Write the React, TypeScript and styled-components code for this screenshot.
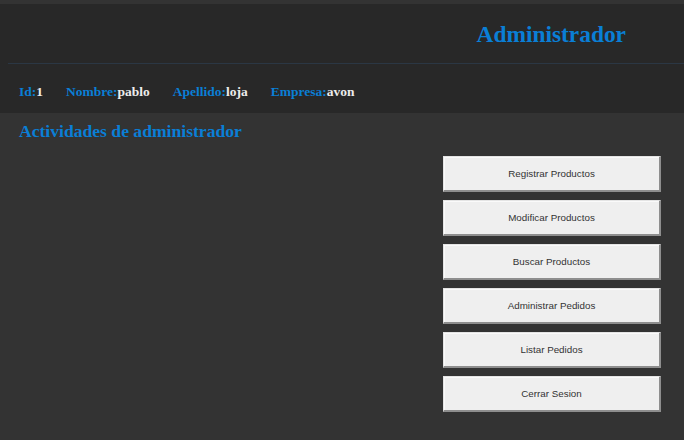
import React from "react";
import styled, { createGlobalStyle } from "styled-components";

const Global = createGlobalStyle`
  html, body { margin: 0; padding: 0; background: #333333; }
  body { width: 684px; height: 440px; overflow: hidden; }
`;

const Page = styled.div`
  padding-top: 4px;
  background: #333333;
  min-height: 436px;
`;

const Header = styled.header`
  background: #282828;
  display: flex;
  flex-direction: column;
`;

const TitleBar = styled.div`
  height: 60px;
  display: flex;
  align-items: center;
  justify-content: flex-end;
  padding-right: 58px;
  padding-top: 1px;
  box-sizing: border-box;
  margin-left: 8px;
  border-bottom: 1px solid #2b3744;
`;

const Title = styled.h1`
  margin: 0;
  font-family: "Liberation Serif", "Times New Roman", serif;
  font-weight: bold;
  font-size: 23.4px;
  color: #0a7fd6;
`;

const InfoRow = styled.div`
  height: 49px;
  display: flex;
  align-items: center;
  gap: 23px;
  padding-left: 19px;
  padding-top: 7px;
  box-sizing: border-box;
  font-family: "Liberation Serif", "Times New Roman", serif;
  font-weight: bold;
  font-size: 13.5px;
`;

const Label = styled.span`
  color: #0a7fd6;
`;

const Value = styled.span`
  color: #ececec;
`;

const Main = styled.main`
  padding: 7px 23px 0 19px;
`;

const Subtitle = styled.h2`
  margin: 0;
  font-family: "Liberation Serif", "Times New Roman", serif;
  font-weight: bold;
  font-size: 17.6px;
  color: #0a7fd6;
  line-height: 22px;
`;

const Actions = styled.div`
  display: flex;
  flex-direction: column;
  align-items: flex-end;
  gap: 8px;
  margin-top: 14px;
`;

const ActionButton = styled.button`
  width: 218px;
  height: 36px;
  background: #efefef;
  border-style: solid;
  border-width: 1px 2px 2px 1px;
  border-color: #e4e4e4 #8e8e8e #8e8e8e #e4e4e4;
  box-shadow: inset 1px 1px 0 #fafafa;
  font-family: "Liberation Sans", Arial, sans-serif;
  font-size: 9.8px;
  color: #333;
  padding: 0;
  cursor: pointer;
`;

const info = [
  ["Id:", "1"],
  ["Nombre:", "pablo"],
  ["Apellido:", "loja"],
  ["Empresa:", "avon"],
];

const actions = [
  "Registrar Productos",
  "Modificar Productos",
  "Buscar Productos",
  "Administrar Pedidos",
  "Listar Pedidos",
  "Cerrar Sesion",
];

export default function App() {
  return (
    <>
      <Global />
      <Page>
        <Header>
          <TitleBar>
            <Title>Administrador</Title>
          </TitleBar>
          <InfoRow>
            {info.map(([l, v]) => (
              <span key={l}>
                <Label>{l}</Label>
                <Value>{v}</Value>
              </span>
            ))}
          </InfoRow>
        </Header>
        <Main>
          <Subtitle>Actividades de administrador</Subtitle>
          <Actions>
            {actions.map((a) => (
              <ActionButton key={a}>{a}</ActionButton>
            ))}
          </Actions>
        </Main>
      </Page>
    </>
  );
}
